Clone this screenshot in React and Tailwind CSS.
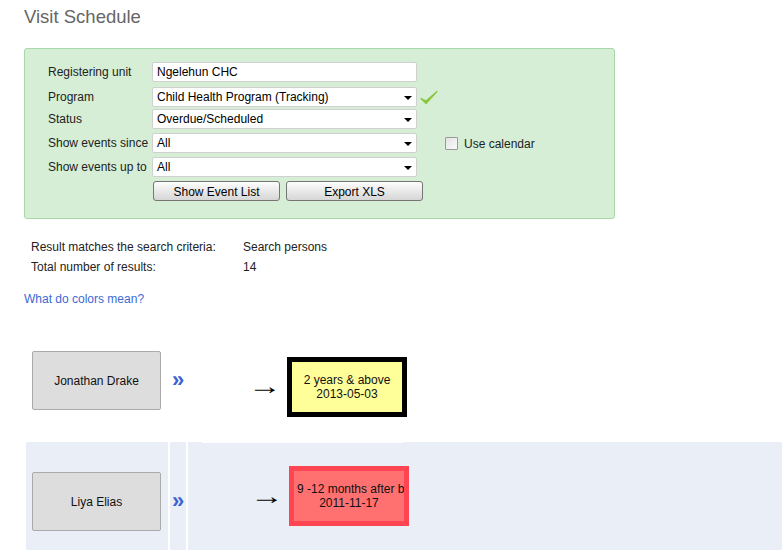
import React from 'react';

const fieldRows = [
  { label: 'Registering unit', value: 'Ngelehun CHC', kind: 'input', mt: 'mt-0' },
  { label: 'Program', value: 'Child Health Program (Tracking)', kind: 'select', mt: 'mt-[5px]', extra: 'check' },
  { label: 'Status', value: 'Overdue/Scheduled', kind: 'select', mt: 'mt-[2px]' },
  { label: 'Show events since', value: 'All', kind: 'select', mt: 'mt-[4px]', extra: 'calendar' },
  { label: 'Show events up to', value: 'All', kind: 'select', mt: 'mt-[4px]' },
];

function Field({ row }) {
  return (
    <div className={`flex h-[20px] items-center ${row.mt}`}>
      <div className="w-[104px] text-[12px] text-[#222]">{row.label}</div>
      <div className="relative flex h-[20px] w-[265px] items-center rounded-[2px] border border-[#d0d0d0] bg-white pl-[4px] text-[12px] text-black">
        {row.value}
        {row.kind === 'select' && (
          <span className="absolute right-[4px] top-[8px] h-0 w-0 border-l-[4px] border-r-[4px] border-t-[4px] border-l-transparent border-r-transparent border-t-black" />
        )}
      </div>
      {row.extra === 'check' && (
        <svg width="18" height="16" viewBox="0 0 18 16" className="ml-[3px] mt-[1px]">
          <path d="M1 8.5 L6 13.5 L17 1.5 L6 11 Z" fill="#8cc63f" stroke="#8cc63f" strokeWidth="1.2" strokeLinejoin="round" />
        </svg>
      )}
      {row.extra === 'calendar' && (
        <div className="ml-[28px] flex items-center">
          <span className="h-[13px] w-[13px] rounded-[1px] border border-[#9a9a9a] bg-gradient-to-br from-[#e4e4e4] to-[#fafafa]" />
          <span className="ml-[6px] mt-[2px] text-[12px] text-[#222]">Use calendar</span>
        </div>
      )}
    </div>
  );
}

function GreyButton({ children, width }) {
  return (
    <button
      type="button"
      className={`h-[20px] ${width} rounded-[3px] border border-[#757575] bg-gradient-to-b from-[#fdfdfd] to-[#d6d6d6] pt-[1px] text-[12px] text-black`}
    >
      {children}
    </button>
  );
}

function PersonRow({ name, bg, boxTop, arrowShift, box, height }) {
  return (
    <div className={`flex gap-[2px] ${height}`}>
      <div className={`flex w-[142px] items-center pl-[6px] ${bg}`}>
        <div className="flex h-[59px] w-[129px] items-center justify-center rounded-[2px] border border-[#aaaaaa] bg-[#dddddd] pt-[1px] text-[12px] text-[#111]">
          {name}
        </div>
      </div>
      <div className={`flex w-[16px] items-center justify-center ${bg}`}>
        <span className="text-[22px] font-bold leading-none text-[#3a62d4]">»</span>
      </div>
      <div className={`relative flex-1 ${bg}`}>
        {box.strip && <div className="absolute left-[14px] top-0 h-[1px] w-[201px] bg-white" />}
        <div className={`flex items-center ${boxTop} ${box.ml}`}>
          <span className={`inline-block w-[24px] origin-left scale-x-[1.4] font-['Liberation_Serif','DejaVu_Serif',serif] text-[24px] leading-none text-black ${arrowShift}`}>→</span>
          <div
            className={`ml-[15px] flex h-[60px] w-[120px] flex-col justify-center overflow-hidden border-[5px] px-[3px] text-center text-[12px] leading-[14px] text-[#111] ${box.cls}`}
          >
            <div className="whitespace-nowrap">{box.line1}</div>
            <div className="whitespace-nowrap">{box.line2}</div>
          </div>
        </div>
      </div>
    </div>
  );
}

export default function App() {
  return (
    <div className="h-[550px] w-[782px] overflow-hidden bg-white font-['Liberation_Sans',Arial,sans-serif]">
      <div className="pl-[24px] pt-[6px]">
        <h1 className="text-[18.5px] leading-[22px] text-[#666]">Visit Schedule</h1>

        <div className="mt-[20px] h-[171px] w-[591px] rounded-[3px] border border-[#a8d8a8] bg-[#d5eed5] pl-[23px] pt-[13px]">
          {fieldRows.map((row) => (
            <Field key={row.label} row={row} />
          ))}
          <div className="ml-[105px] mt-[4px] flex gap-[6px]">
            <GreyButton width="w-[127px]">Show Event List</GreyButton>
            <GreyButton width="w-[137px]">Export XLS</GreyButton>
          </div>
        </div>

        <div className="ml-[7px] mt-[18px] text-[12px] leading-[20px] text-[#222]">
          <div className="flex">
            <span className="w-[212px]">Result matches the search criteria:</span>
            <span>Search persons</span>
          </div>
          <div className="flex">
            <span className="w-[212px]">Total number of results:</span>
            <span>14</span>
          </div>
        </div>

        <div className="mt-[12px] text-[12px] leading-[20px] text-[#3b6ad4]">What do colors mean?</div>
      </div>

      <div className="ml-[26px] mt-[11px] flex flex-col gap-[2px]">
        <PersonRow
          name="Jonathan Drake"
          bg="bg-white"
          height="h-[120px]"
          boxTop="mt-[37px]"
          arrowShift="-mt-[2px]"
          box={{ ml: 'ml-[60px]', cls: 'border-black bg-[#ffff99]', line1: '2 years & above', line2: '2013-05-03' }}
        />
        <PersonRow
          name="Liya Elias"
          bg="bg-[#eaeff7]"
          height="h-[118px]"
          boxTop="mt-[24px]"
          arrowShift="mt-0"
          box={{ ml: 'ml-[62px]', strip: true, cls: 'border-[#ff4452] bg-[#ff7070]', line1: '9 -12 months after b', line2: '2011-11-17' }}
        />
      </div>
    </div>
  );
}
